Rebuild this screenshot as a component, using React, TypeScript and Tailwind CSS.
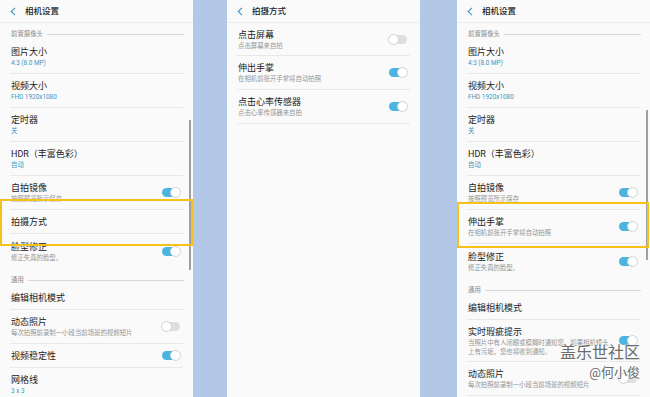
import React from 'react';

type Item = {
  title: string;
  sub?: string[];
  blue?: boolean;
  toggle?: 'on' | 'off';
  h: string;
  line?: boolean;
};

type Block = { section: string; h: string } | Item;

const Toggle = ({ on }: { on: boolean }) => (
  <div className={`relative h-[9px] w-[18px] shrink-0 rounded-full ${on ? 'bg-[#4cb4e0]' : 'bg-[#dedede]'}`}>
    <div
      className={`absolute top-[-1px] h-[11px] w-[11px] rounded-full border border-[#d2d2d2] bg-white ${
        on ? 'right-[-1px]' : 'left-[-1px]'
      }`}
    />
  </div>
);

const Row = ({ item }: { item: Item }) => (
  <div className={`${item.h} flex shrink-0 flex-col`}>
    <div className="flex flex-1 items-center pl-[11px] pr-[13px]">
      <div className="flex flex-1 flex-col pt-[1px]">
        <div className="text-[9px] leading-[13px] text-[#222]">{item.title}</div>
        {item.sub?.map((s) => (
          <div
            key={s}
            className={`text-[6.4px] leading-[9px] ${item.blue ? 'text-[#3d96c2]' : 'text-[#959595]'}`}
          >
            {s}
          </div>
        ))}
      </div>
      {item.toggle && <Toggle on={item.toggle === 'on'} />}
    </div>
    {item.line !== false && <div className="mx-[10px] h-px bg-[#e8e8e8]" />}
  </div>
);

const Section = ({ label, h }: { label: string; h: string }) => (
  <div className={`${h} flex shrink-0 items-end gap-[4px] pb-[1px] pl-[11px] pr-[9px]`}>
    <span className="text-[6.4px] leading-[9px] text-[#8a8a8a]">{label}</span>
    <div className="mb-[4px] h-px flex-1 bg-[#d8d8d8]" />
  </div>
);

const Panel = ({ title, blocks, scroll }: { title: string; blocks: Block[]; scroll?: string }) => (
  <div className="relative flex h-full w-[193px] shrink-0 flex-col overflow-hidden bg-[#fafafa]">
    <div className="flex h-[22px] shrink-0 items-center gap-[9px] pl-[10px]">
      <svg width="6" height="9" viewBox="0 0 6 9" fill="none">
        <path d="M5 0.8 L1.2 4.5 L5 8.2" stroke="#3d96c2" strokeWidth="1.1" />
      </svg>
      <span className="text-[8.5px] font-medium text-[#222]">{title}</span>
    </div>
    <div className="h-px shrink-0 bg-[#ececec]" />
    {blocks.map((b, i) =>
      'section' in b ? <Section key={i} label={b.section} h={b.h} /> : <Row key={i} item={b} />
    )}
    {scroll && <div className={`absolute right-[2px] w-[2px] bg-[#a0a0a0] ${scroll}`} />}
  </div>
);

const panel1: Block[] = [
  { section: '前置摄像头', h: 'h-[17px]' },
  { title: '图片大小', sub: ['4:3 (8.0 MP)'], blue: true, h: 'h-[34px]' },
  { title: '视频大小', sub: ['FHD 1920x1080'], blue: true, h: 'h-[34px]' },
  { title: '定时器', sub: ['关'], blue: true, h: 'h-[34px]' },
  { title: 'HDR（丰富色彩）', sub: ['自动'], blue: true, h: 'h-[34px]' },
  { title: '自拍镜像', sub: ['按照预览所示保存'], toggle: 'on', h: 'h-[34px]' },
  { title: '拍摄方式', h: 'h-[24px]' },
  { title: '脸型修正', sub: ['修正失真的脸型。'], toggle: 'on', h: 'h-[34px]', line: false },
  { section: '通用', h: 'h-[18px]' },
  { title: '编辑相机模式', h: 'h-[24px]' },
  { title: '动态照片', sub: ['每次拍照前录制一小段当前场景的视频短片'], toggle: 'off', h: 'h-[34px]' },
  { title: '视频稳定性', toggle: 'on', h: 'h-[24px]' },
  { title: '网格线', sub: ['3 x 3'], blue: true, h: 'h-[34px]' },
];

const panel2: Block[] = [
  { title: '点击屏幕', sub: ['点击屏幕来自拍'], toggle: 'off', h: 'h-[33px]' },
  { title: '伸出手掌', sub: ['在相机前张开手掌将自动拍照'], toggle: 'on', h: 'h-[34px]' },
  { title: '点击心率传感器', sub: ['点击心率传感器来自拍'], toggle: 'on', h: 'h-[34px]' },
];

const panel3: Block[] = [
  { section: '前置摄像头', h: 'h-[17px]' },
  { title: '图片大小', sub: ['4:3 (8.0 MP)'], blue: true, h: 'h-[34px]' },
  { title: '视频大小', sub: ['FHD 1920x1080'], blue: true, h: 'h-[34px]' },
  { title: '定时器', sub: ['关'], blue: true, h: 'h-[34px]' },
  { title: 'HDR（丰富色彩）', sub: ['自动'], blue: true, h: 'h-[34px]' },
  { title: '自拍镜像', sub: ['按照预览所示保存'], toggle: 'on', h: 'h-[34px]' },
  { title: '伸出手掌', sub: ['在相机前张开手掌将自动拍照'], toggle: 'on', h: 'h-[34px]' },
  { title: '脸型修正', sub: ['修正失真的脸型。'], toggle: 'on', h: 'h-[34px]', line: false },
  { section: '通用', h: 'h-[18px]' },
  { title: '编辑相机模式', h: 'h-[24px]' },
  {
    title: '实时瑕疵提示',
    sub: ['当照片中有人闭眼或模糊时通知您。如果相机镜头', '上有污垢，您也将收到通知。'],
    toggle: 'on',
    h: 'h-[42px]',
  },
  { title: '动态照片', sub: ['每次拍照前录制一小段当前场景的视频短片'], toggle: 'off', h: 'h-[34px]' },
];

export default function App() {
  return (
    <div
      className="relative flex h-[397px] w-[650px] overflow-hidden bg-[#b3c7e6]"
      style={{ fontFamily: "Roboto, 'Noto Sans CJK SC', sans-serif" }}
    >
      <Panel title="相机设置" blocks={panel1} scroll="top-[120px] h-[150px]" />
      <div className="w-[34px] shrink-0" />
      <Panel title="拍摄方式" blocks={panel2} />
      <div className="w-[37px] shrink-0" />
      <Panel title="相机设置" blocks={panel3} scroll="top-[110px] h-[150px]" />

      {/* highlight boxes */}
      <div className="absolute left-0 top-[199px] h-[47px] w-[193px] border-2 border-[#f5c21b]" />
      <div className="absolute left-[457px] top-[202px] h-[46px] w-[192px] border-2 border-[#f5c21b]" />

      {/* watermark, lies over the list */}
      <div className="absolute left-[560px] top-[342px] flex flex-col items-end">
        <span className="text-[16px] leading-[22px] text-[#6b6b6b] [text-shadow:0_0_2px_#fff,0_0_2px_#fff]">
          盖乐世社区
        </span>
        <span className="text-[13px] leading-[18px] text-[#6b6b6b] [text-shadow:0_0_2px_#fff,0_0_2px_#fff]">
          @何小俊
        </span>
      </div>
    </div>
  );
}
